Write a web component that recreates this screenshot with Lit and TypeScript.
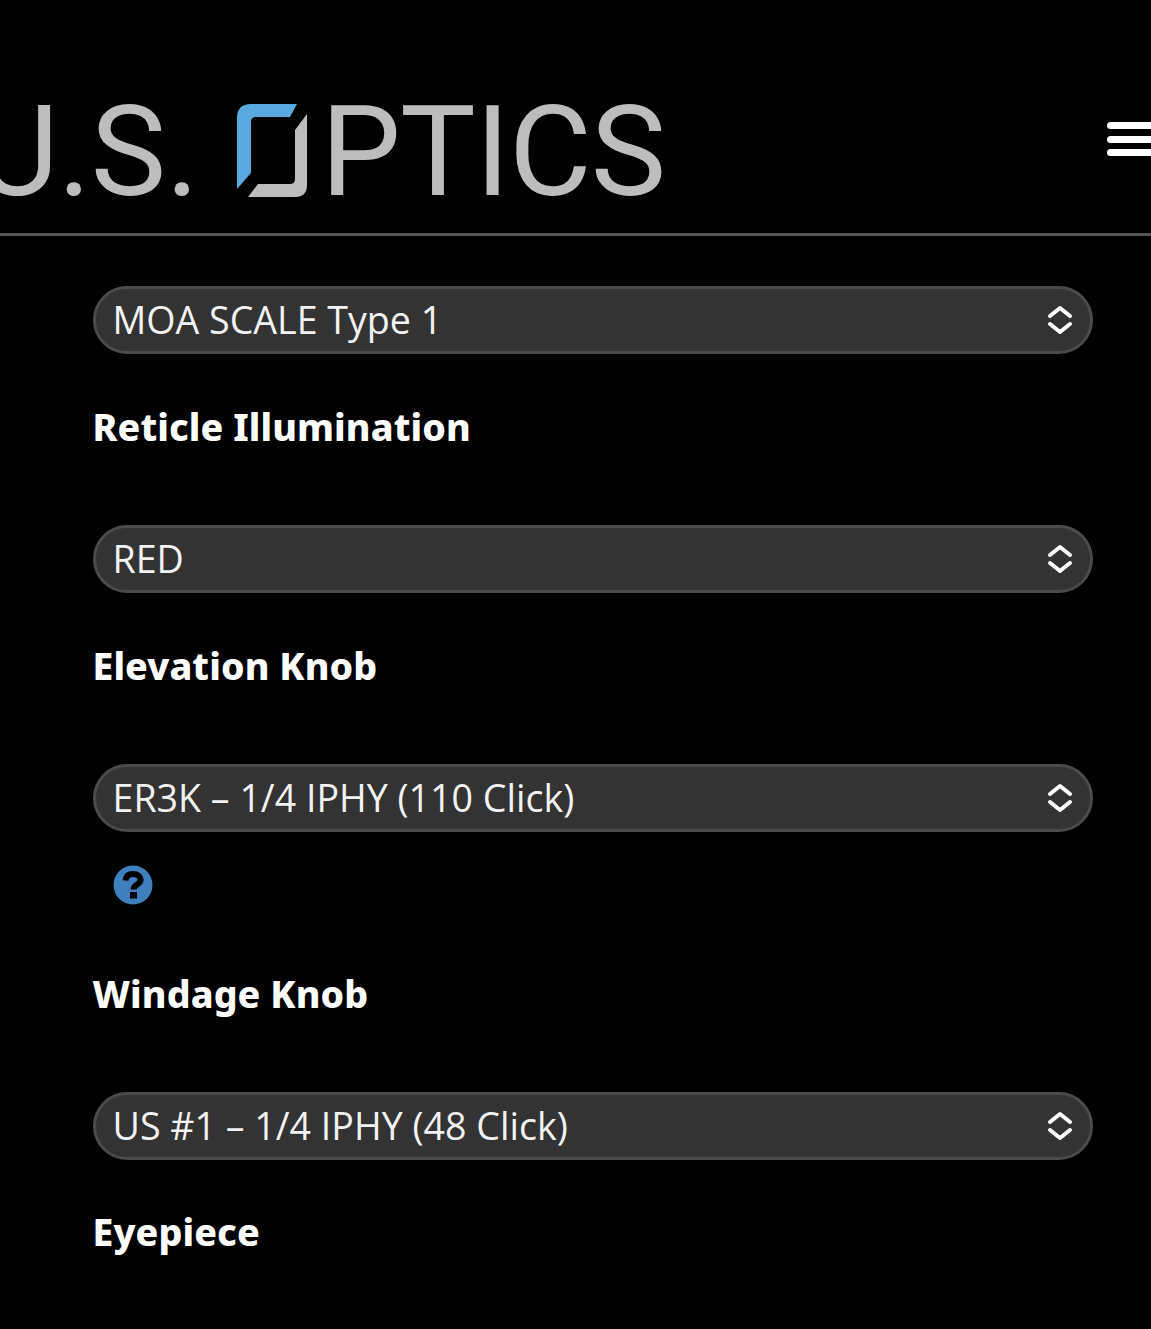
import { LitElement, html, css } from "lit";
import { customElement } from "lit/decorators.js";

const chev = html`<svg class="chev" viewBox="0 0 26 30" fill="none" stroke="#fff" stroke-width="4" stroke-linecap="round" stroke-linejoin="round"><path d="M3 11 13 3 23 11"/><path d="M3 19 13 27 23 19"/></svg>`;

@customElement("app-root")
export class AppRoot extends LitElement {
  static styles = css`
    :host { display: block; background: #000; height: 1329px; overflow: hidden; color: #fff; font-family: "Open Sans", sans-serif; }
    header { height: 233px; border-bottom: 3px solid #555; display: flex; position: relative; overflow: hidden; }
    .logo { display: flex; align-items: flex-start; margin-left: -24px; padding-top: 82px; color: #bdbdbd; font-family: "Roboto", sans-serif; font-weight: 400; font-size: 127px; line-height: 140px; height: 140px; white-space: nowrap; filter: blur(0.7px); }
    .logo span { display: block; }
    .us { letter-spacing: -0.5px; }
    .ptics { letter-spacing: -0.75px; }
    .o { width: 72px; height: 96px; margin: 21px 13px 0 37px; flex: none; }
    .burger { position: absolute; left: 1107px; top: 122px; width: 60px; display: flex; flex-direction: column; gap: 6.5px; }
    .burger i { display: block; height: 7px; background: #fff; border-radius: 4px; }
    main { padding: 50px 58px 0 92.5px; }
    .sel { height: 68px; box-sizing: border-box; border: 3px solid #4b4b4b; background: #333; border-radius: 34px; display: flex; align-items: center; justify-content: space-between; padding: 0 17px 0 17px; font-size: 37.6px; color: #f2f2f2; white-space: nowrap; }
    .sel span { margin-top: -2px; }
    .chev { width: 26px; height: 30px; }
    h2 { margin: 0; font-family: "Noto Sans", sans-serif; font-weight: 800; font-size: 37.5px; letter-spacing: 0.1px; line-height: 50px; color: #fff; }
    .label { margin-top: 48px; margin-bottom: 73px; }
    .help { margin: 33px 0 0 20px; width: 40px; height: 40px; display: block; }
    .label.after { margin-top: 64px; }
    .last { margin-top: 47px; }
  `;
  render() {
    return html`
      <header>
        <div class="logo">
          <span class="us">U.S.</span>
          <svg class="o" viewBox="0 0 72 96">
            <path fill="#5aa9e0" d="M1 86V15Q1 1 15 1H61L54 14H20Q15 14 15 19V70Z"/>
            <path fill="#bdbdbd" d="M71 11V82Q71 94 59 94H12L22 81H54Q59 81 59 76V27Z"/>
          </svg>
          <span class="ptics">PTICS</span>
        </div>
        <div class="burger"><i></i><i></i><i></i></div>
      </header>
      <main>
        <div class="sel"><span>MOA SCALE Type 1</span>${chev}</div>
        <h2 class="label">Reticle Illumination</h2>
        <div class="sel"><span>RED</span>${chev}</div>
        <h2 class="label">Elevation Knob</h2>
        <div class="sel"><span>ER3K – 1/4 IPHY (110 Click)</span>${chev}</div>
        <svg class="help" viewBox="0 0 40 40">
          <circle cx="20" cy="20" r="19.5" fill="#3f7fbd"/>
          <path fill="none" stroke="#000" stroke-width="6" d="M12.5 15.5C13 10.5 16 9 20 9C24.5 9 27.5 11.5 27.5 15C27.5 19.5 20.5 19.5 20.5 24.5"/>
          <rect x="17" y="27" width="7" height="6.5" fill="#000"/>
        </svg>
        <h2 class="label after">Windage Knob</h2>
        <div class="sel"><span>US #1 – 1/4 IPHY (48 Click)</span>${chev}</div>
        <h2 class="last">Eyepiece</h2>
      </main>`;
  }
}
